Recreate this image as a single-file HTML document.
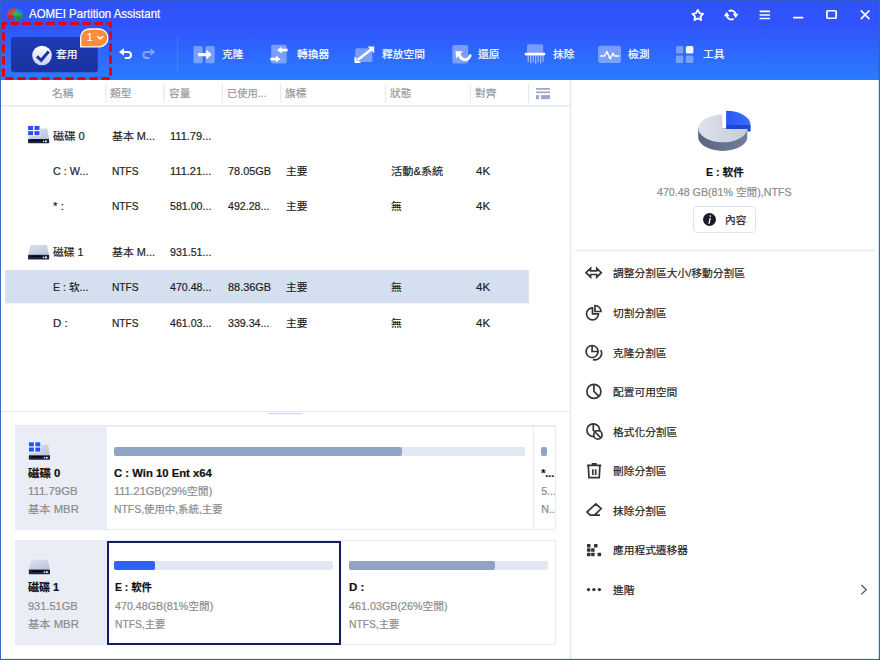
<!DOCTYPE html>
<html><head><meta charset="utf-8"><title>AOMEI Partition Assistant</title>
<style>
html,body{margin:0;padding:0;}
body{width:880px;height:660px;overflow:hidden;background:#fff;position:relative;
 font-family:"Liberation Sans","Noto Sans CJK TC",sans-serif;font-size:10.67px;color:#1f1f1f;}
.abs{position:absolute;}
.t{position:absolute;white-space:nowrap;line-height:16px;height:16px;transform-origin:0 50%;-webkit-text-stroke:0.2px;}
.big{font-size:12px;}
#hdr{left:0;top:0;width:880px;height:80px;background:linear-gradient(180deg,#3052fb 0%,#3054fb 32%,#2b7cff 100%);}
.w{color:#fff;}
.g{color:#8c8c8c;}
.h{color:#999;}
.b{font-weight:bold;color:#111;}
svg{position:absolute;overflow:visible;}
</style></head><body>
<div id="hdr" class="abs"></div>
<!-- selected row -->
<svg style="left:0;top:260px" width="540" height="50"><rect x="5.2" y="10" width="523.7" height="33.4" fill="#d4dff0"/></svg>
<!-- table header lines -->
<svg style="left:0;top:80px" width="570" height="30"><rect x="105.35" y="3.8" width="1.1" height="18.7" fill="#e3e7f1"/><rect x="163.55" y="3.8" width="1.1" height="18.7" fill="#e3e7f1"/><rect x="221.75" y="3.8" width="1.1" height="18.7" fill="#e3e7f1"/><rect x="279.85" y="3.8" width="1.1" height="18.7" fill="#e3e7f1"/><rect x="385.05" y="3.8" width="1.1" height="18.7" fill="#e3e7f1"/><rect x="469.85" y="3.8" width="1.1" height="18.7" fill="#e3e7f1"/><rect x="527.95" y="3.8" width="1.1" height="18.7" fill="#e3e7f1"/></svg>
<div class="abs" style="left:1px;top:105px;width:569px;height:2px;background:#eaeef6;"></div>
<!-- splitters -->
<div class="abs" style="left:1px;top:411px;width:569px;height:1px;background:#e4e9f4;"></div>
<svg style="left:260px;top:410px" width="50" height="8"><rect x="7.5" y="2.9" width="35.5" height="1.3" fill="#cdd6eb"/></svg>
<svg style="left:565px;top:80px" width="10" height="579"><rect x="5" y="0" width="1.35" height="579" fill="#e2e8f4"/></svg>
<!-- disk maps -->
<div class="abs" style="left:15px;top:425px;width:541px;height:105px;background:#e7ebf3;"></div>
<div class="abs" style="left:107px;top:427px;width:426px;height:102px;background:#fff;"></div>
<div class="abs" style="left:534px;top:427px;width:21px;height:102px;background:#fff;"></div>
<div class="abs" style="left:15px;top:540px;width:541px;height:105px;background:#e7ebf3;"></div>
<div class="abs" style="left:107px;top:541px;width:448px;height:103px;background:#fff;"></div>
<div class="abs" style="left:15px;top:426px;width:92px;height:103px;background:#eaedf5;"></div>
<div class="abs" style="left:15px;top:541px;width:92px;height:103px;background:#eaedf5;"></div>
<div class="abs" style="left:114px;top:447px;width:411px;height:9px;border-radius:2px;background:#e1e7f3;"></div>
<div class="abs" style="left:114px;top:447px;width:288px;height:9px;border-radius:2px;background:#8fa4c5;"></div>
<div class="abs" style="left:541px;top:447px;width:6px;height:9px;border-radius:2px;background:#8fa4c5;"></div>
<div class="abs" style="left:107px;top:541px;width:234px;height:104px;border:2px solid #141d5e;box-sizing:border-box;background:#fff;"></div>
<div class="abs" style="left:114px;top:561px;width:219px;height:9px;border-radius:2px;background:#e1e7f3;"></div>
<div class="abs" style="left:114px;top:561px;width:41px;height:9px;border-radius:2px;background:#2f63f8;"></div>
<div class="abs" style="left:349px;top:561px;width:199px;height:9px;border-radius:2px;background:#e1e7f3;"></div>
<div class="abs" style="left:349px;top:561px;width:146px;height:9px;border-radius:2px;background:#8fa4c5;"></div>
<!-- right panel -->
<div class="abs" style="left:693px;top:206px;width:63px;height:27px;border:1px solid #dde3f1;border-radius:4px;box-sizing:border-box;"></div>
<svg style="left:570px;top:245px" width="310" height="10"><rect x="4.8" y="4.6" width="300" height="1.5" fill="#e5eaf6"/></svg>
<!-- apply button -->
<div class="abs" style="left:536px;top:460px;width:18.6px;height:60px;overflow:hidden;">
<div class="t b" style="left:5.2px;top:4.5px;">*...</div>
<div class="t g" style="left:5.2px;top:23px;">5...</div>
<div class="t g" style="left:5.2px;top:41.2px;">N...</div>
</div>
<svg style="left:0;top:0" width="880" height="660" viewBox="0 0 880 660">
<defs>
<linearGradient id="gbt" x1="0" y1="0" x2="0" y2="1"><stop offset="0" stop-color="#1d3bb6"/><stop offset="1" stop-color="#1b329f"/></linearGradient>
<linearGradient id="gck" x1="0" y1="0" x2="0" y2="1"><stop offset="0" stop-color="#ffffff"/><stop offset="1" stop-color="#c9d2f5"/></linearGradient>
<linearGradient id="gdk" x1="0" y1="0" x2="1" y2="1"><stop offset="0" stop-color="#dde2ee"/><stop offset="1" stop-color="#b9c2d6"/></linearGradient>
<linearGradient id="gpt" x1="0" y1="0" x2="1" y2="0"><stop offset="0" stop-color="#dde1eb"/><stop offset="1" stop-color="#c6ccdb"/></linearGradient>
<linearGradient id="gps" x1="0" y1="0" x2="1" y2="0"><stop offset="0" stop-color="#59647f"/><stop offset="1" stop-color="#737e98"/></linearGradient>
<linearGradient id="gpb" x1="0" y1="0" x2="1" y2="0"><stop offset="0" stop-color="#2a55fb"/><stop offset="1" stop-color="#3b70ff"/></linearGradient>
</defs>
<rect x="11" y="37" width="86.8" height="35.3" rx="3" fill="url(#gbt)"/>
<!-- red dashed -->
<rect x="3.5" y="23.5" width="107" height="55" fill="none" stroke="#e6000b" stroke-width="3" stroke-dasharray="6 6" stroke-dashoffset="3.9" stroke-linecap="round"/>
<!-- app icon -->
<g>
<path d="M7 15.5 C7 10.5 11 8.2 15.5 8.2 L15.5 14 L12 17 L9 19.5 L7.2 18.5 Z" fill="#e23a3a"/>
<path d="M7.2 15.5 L12 15 L14.5 17 L9.5 20.3 L7.2 19 Z" fill="#bf2c2c"/>
<path d="M15.5 8.2 C19.5 8.2 22.8 10.5 22.8 13.5 L19 14 L15 11.5 Z" fill="#2a78e4"/>
<path d="M12.5 11.5 L17 10.8 L20 13.2 L22.6 13.8 L22.6 17.5 L17 20.8 L14.8 20 L14.8 16.5 L12.2 14.2 Z" fill="#2fae62"/>
<path d="M14.8 16.8 L22.6 14.5 L22.6 17.8 L17 20.9 L14.8 20.2 Z" fill="#1f8b4b"/>
</g>
<!-- apply check -->
<circle cx="42" cy="55.5" r="9.8" fill="url(#gck)"/>
<path d="M36.9 56.3 L41.2 60.3 L48.7 51.6" fill="none" stroke="#1c36a8" stroke-width="3" stroke-linejoin="miter"/>
<!-- badge -->
<path d="M80.7 46.8 V37.5 A8.5 8.5 0 0 1 89.2 29 H99 A8.9 8.9 0 0 1 99 46.8 Z" fill="#ff8b3d" stroke="#fff" stroke-width="1.3"/>
<path d="M97.9 36.6 L100.3 38.9 L102.7 36.6" fill="none" stroke="#fff" stroke-width="1.5" stroke-linecap="round" stroke-linejoin="round"/>
<!-- undo / redo -->
<g fill="none" stroke="#fff" stroke-width="2">
<path d="M123.5 52 H128 a3 3 0 0 1 0 6 H124.8"/>
</g>
<path d="M119 52 L123.9 48.2 V55.8 Z" fill="#fff"/>
<g opacity="0.4">
<path d="M150.9 52 H146.4 a3 3 0 0 0 0 6 H149.4" fill="none" stroke="#fff" stroke-width="2"/>
<path d="M155.3 52 L150.5 48.2 V55.8 Z" fill="#fff"/>
</g>
<rect x="177.1" y="37" width="1" height="35" fill="#fff" opacity="0.13"/>
<!-- clone -->
<g fill="#fff">
<rect x="193.5" y="46" width="9.2" height="17.2" rx="1.5" opacity="0.36"/>
<rect x="205.5" y="46" width="9.2" height="17.2" rx="1.5" opacity="0.36"/>
<path d="M198 52.9 H206.2 V49.6 L211.7 54.6 L206.2 59.6 V56.3 H198 Z"/>
</g>
<!-- converter -->
<g fill="#fff">
<rect x="271.2" y="44.8" width="15.4" height="18.8" rx="1.5" opacity="0.36"/>
<path d="M277 50.1 L281.6 46.7 V48.7 H287.6 V51.5 H281.6 V53.5 Z"/>
<path d="M280.6 59.1 L276 55.7 V57.7 H270.3 V60.5 H276 V62.5 Z"/>
</g>
<!-- free space -->
<g fill="#fff">
<rect x="355.3" y="48.3" width="17.1" height="13.6" rx="1.5" opacity="0.36"/>
<path d="M367.6 46.6 H374.2 V53.2 Z M354.5 56.4 V63 H361.1 Z M372.3 50.3 L358 61.3 L356.4 59.3 L370.7 48.3 Z"/>
</g>
<!-- restore -->
<g fill="#fff">
<rect x="452.3" y="45" width="15.8" height="18.6" rx="2" opacity="0.36"/>
<path d="M455.5 51 L462.9 51.6 L456.1 58.4 Z"/><path d="M459.4 55 C461 60 467.3 62.3 470.2 55.6" fill="none" stroke="#fff" stroke-width="2.8" stroke-linecap="round"/>
</g>
<!-- wipe -->
<g fill="#fff">
<rect x="527" y="44.3" width="16.2" height="9" rx="1.5" opacity="0.36"/>
<rect x="524.6" y="52.8" width="20.8" height="2.6" rx="1.3"/>
<g opacity="0.55">
<rect x="527.6" y="55.4" width="1.2" height="6.4"/><rect x="530.1" y="55.4" width="1.2" height="8"/><rect x="532.6" y="55.4" width="1.2" height="7"/><rect x="535.1" y="55.4" width="1.2" height="8.4"/><rect x="537.6" y="55.4" width="1.2" height="7"/><rect x="540.1" y="55.4" width="1.2" height="8"/><rect x="542.4" y="55.4" width="1.2" height="6.4"/>
</g>
</g>
<!-- check -->
<rect x="598.1" y="45.8" width="22.9" height="17.2" rx="2" fill="#fff" opacity="0.36"/>
<path d="M600.3 56.1 H604.3 L606.9 51.5 L610 58.8 L613 53.4 L614.6 56.1 H619.4" fill="none" stroke="#fff" stroke-width="1.5" stroke-linejoin="round"/>
<!-- tools -->
<g fill="#fff">
<rect x="676" y="46.1" width="7.3" height="7.3" rx="1.5" opacity="0.36"/>
<rect x="685.8" y="46.1" width="7.6" height="7.3" rx="1.5" opacity="0.95"/>
<rect x="676" y="55.6" width="7.3" height="7.4" rx="1.5" opacity="0.36"/>
<rect x="685.8" y="55.6" width="7.6" height="7.4" rx="1.5" opacity="0.36"/>
</g>
<!-- window controls -->
<g fill="none" stroke="#fff" stroke-width="1.8" stroke-linejoin="round">
<path d="M697.8 9.9 L699.5 13.2 L703.1 13.8 L700.6 16.4 L701.1 20.0 L697.8 18.4 L694.5 20.0 L695.0 16.4 L692.5 13.8 L696.1 13.2 Z"/>
<path d="M728.7 11.3 A4.6 4.6 0 0 1 735.8 14.6"/>
<path d="M733.7 18.7 A4.6 4.6 0 0 1 726.6 15.4"/>
</g>
<path d="M732.8 13.8 H738.6 L735.7 18 Z" fill="#fff"/>
<path d="M723.8 16.2 H729.6 L726.7 12 Z" fill="#fff"/>
<g fill="#fff">
<rect x="759.5" y="10.55" width="10.6" height="1.6" rx="0.4"/><rect x="759.5" y="14.15" width="10.6" height="1.6" rx="0.4"/><rect x="759.5" y="17.7" width="10.6" height="1.6" rx="0.4"/>
<rect x="793" y="16.7" width="10.4" height="1.7" rx="0.4"/>
</g>
<rect x="826.95" y="10.75" width="9.2" height="7.5" rx="0.8" fill="none" stroke="#fff" stroke-width="1.7"/>
<path d="M861.3 10.9 L869 18.6 M869 10.9 L861.3 18.6" stroke="#fff" stroke-width="1.6" fill="none" stroke-linecap="round"/>
<!-- list icon -->
<g fill="#9ba5c6">
<rect x="536" y="88" width="14" height="1.7"/><rect x="536" y="91.5" width="14" height="1.6"/><rect x="536" y="95.1" width="3.1" height="4"/><rect x="541.1" y="95.1" width="8.9" height="4"/>
</g>
<!-- disk icons -->
<g>
<path d="M31 128.4 H47.3 L49.2 139 H28 Z" fill="url(#gdk)"/>
<rect x="28" y="138.9" width="21.2" height="4.4" rx="0.8" fill="#1b2646"/>
<rect x="30.6" y="139.7" width="12" height="1.5" fill="#05070f"/>
<rect x="43.1" y="140.8" width="1.1" height="1.2" fill="#fff"/><rect x="45" y="140.6" width="1.8" height="1.5" fill="#fff"/>
<rect x="27.4" y="125.2" width="12.9" height="10.8" fill="#fff" opacity="0.9"/>
<g fill="#2450ff"><rect x="28.1" y="125.9" width="5" height="4.1"/><rect x="34.5" y="125.9" width="5" height="4.1"/><rect x="28.1" y="131.1" width="5" height="4.1"/><rect x="34.5" y="131.1" width="5" height="4.1"/></g>
</g>
<g>
<path d="M30.5 245 H46.8 L49.2 254.8 H28 Z" fill="url(#gdk)"/>
<rect x="28" y="254.7" width="21.2" height="4.8" rx="0.8" fill="#1b2646"/>
<rect x="30.9" y="255.5" width="11" height="1.6" fill="#05070f"/>
<rect x="43" y="256.8" width="1.1" height="1.3" fill="#fff"/><rect x="44.9" y="256.6" width="2.1" height="1.6" fill="#fff"/>
</g>
<g transform="translate(0.8 316.4)">
<path d="M31 128.4 H47.3 L49.2 139 H28 Z" fill="url(#gdk)"/>
<rect x="28" y="138.9" width="21.2" height="4.4" rx="0.8" fill="#1b2646"/>
<rect x="30.6" y="139.7" width="12" height="1.5" fill="#05070f"/>
<rect x="43.1" y="140.8" width="1.1" height="1.2" fill="#fff"/><rect x="45" y="140.6" width="1.8" height="1.5" fill="#fff"/>
<rect x="27.4" y="125.2" width="12.9" height="10.8" fill="#fff" opacity="0.9"/>
<g fill="#2450ff"><rect x="28.1" y="125.9" width="5" height="4.1"/><rect x="34.5" y="125.9" width="5" height="4.1"/><rect x="28.1" y="131.1" width="5" height="4.1"/><rect x="34.5" y="131.1" width="5" height="4.1"/></g>
</g>
<g transform="translate(0.8 314.8)">
<path d="M30.5 245 H46.8 L49.2 254.8 H28 Z" fill="url(#gdk)"/>
<rect x="28" y="254.7" width="21.2" height="4.8" rx="0.8" fill="#1b2646"/>
<rect x="30.9" y="255.5" width="11" height="1.6" fill="#05070f"/>
<rect x="43" y="256.8" width="1.1" height="1.3" fill="#fff"/><rect x="44.9" y="256.6" width="2.1" height="1.6" fill="#fff"/>
</g>
<!-- pie -->
<path d="M698.2 128.4 V137 A24.55 13.9 0 0 0 747.3 137 V128.4 Z" fill="url(#gps)"/>
<path d="M722.3 114.5 A24.5 13.9 0 1 0 747.3 129.1 H722.3 Z" fill="url(#gpt)"/>
<path d="M726.1 125 H750.6 V131.5 H747.5 V129 H726.1 Z" fill="#1f46d2"/>
<path d="M726.1 110.7 A24.5 14.3 0 0 1 750.6 125 H726.1 Z" fill="url(#gpb)"/>
<!-- info -->
<circle cx="709.5" cy="219.5" r="6.5" fill="#1b1b2a"/>
<path d="M710.6 215.3 L711.2 216.6 L709.9 216.9 L709.4 215.6 Z M709.6 218 L710.9 218 L709.6 223.8 L708.3 223.8 Z" fill="#fff"/>
<!-- right menu icons -->
<g fill="none" stroke="#363636" stroke-width="1.7" stroke-linejoin="miter">
<path d="M586 272.7 L590.6 268.2 V270.9 H596.7 V268.2 L601.3 272.7 L596.7 277.2 V274.5 H590.6 V277.2 Z"/>
<path d="M592.5 307.8 A6 6 0 1 0 598.5 313.8 H592.5 Z"/>
<path d="M595 305.5 A6 6 0 0 1 601 311.5 H595 Z"/>
<circle cx="592.1" cy="351.5" r="6"/>
<path d="M592.1 345.5 V351.5 H598.1"/>
<path d="M600.8 350.2 A6.5 6.5 0 0 1 592.9 359.4"/>
<circle cx="593.9" cy="391.4" r="7"/>
<path d="M593.9 384.4 V391.4 L599 396.3"/>
<circle cx="593.3" cy="430.2" r="6.4"/>
<path d="M593.3 423.8 V430.2 L596 433"/>
<circle cx="597.9" cy="434.9" r="4.2" fill="#fff"/>
<path d="M594.9 432 L600.9 437.8"/>
<path d="M587 465.4 H601.2 M591.7 463.8 H596.7"/>
<path d="M588.3 465.6 L589 477.7 H599.2 L599.9 465.6"/>
<path d="M592.8 469.3 V475 M595.7 469.3 V475"/>
<path d="M595.8 503.9 L601.2 508.6 L594.6 515.2 H590.2 L587 512 Z M594.6 515.2 H600"/>
</g>
<g fill="#333">
<rect x="587" y="544" width="3.5" height="3.5" rx="0.6"/><rect x="594" y="544" width="3.5" height="3.5" rx="0.6"/>
<rect x="587" y="548.3" width="3.5" height="3.5" rx="0.6"/><rect x="591.1" y="548.3" width="3.5" height="3.5" rx="0.6"/>
<rect x="587" y="552.7" width="3.5" height="3.5" rx="0.6"/><rect x="591.1" y="552.7" width="3.5" height="3.5" rx="0.6"/><rect x="597.6" y="552.7" width="3.5" height="3.5" rx="0.6"/>
<circle cx="588.5" cy="589.6" r="1.7"/><circle cx="593.9" cy="589.6" r="1.7"/><circle cx="599.4" cy="589.6" r="1.7"/>
</g>
<path d="M861.3 585 L866.3 589.7 L861.3 594.4" fill="none" stroke="#555" stroke-width="1.3"/>
</svg>

<!-- texts -->
<div class="t w big" style="left:28.9px;top:5.7px;transform:scaleX(0.9549);">AOMEI Partition Assistant</div>
<div class="t w" style="left:56.0px;top:46.2px;transform:scaleX(1.0050);">套用</div>
<div class="t w" style="left:221.8px;top:46.2px;transform:scaleX(1.0050);">克隆</div>
<div class="t w" style="left:296.9px;top:46.2px;transform:scaleX(1.0050);">轉換器</div>
<div class="t w" style="left:382.0px;top:46.2px;transform:scaleX(1.0050);">釋放空間</div>
<div class="t w" style="left:478.1px;top:46.2px;transform:scaleX(1.0050);">還原</div>
<div class="t w" style="left:553.1px;top:46.2px;transform:scaleX(1.0050);">抹除</div>
<div class="t w" style="left:628.1px;top:46.2px;transform:scaleX(1.0050);">檢測</div>
<div class="t w" style="left:702.8px;top:46.2px;transform:scaleX(1.0050);">工具</div>
<div class="t h" style="left:52.3px;top:84.8px;transform:scaleX(1.0050);">名稱</div>
<div class="t h" style="left:110.2px;top:84.8px;transform:scaleX(1.0050);">類型</div>
<div class="t h" style="left:168.6px;top:84.8px;transform:scaleX(1.0050);">容量</div>
<div class="t h" style="left:227.4px;top:84.8px;transform:scaleX(0.9618);">已使用...</div>
<div class="t h" style="left:284.7px;top:84.8px;transform:scaleX(1.0050);">旗標</div>
<div class="t h" style="left:390.2px;top:84.8px;transform:scaleX(1.0050);">狀態</div>
<div class="t h" style="left:475.0px;top:84.8px;transform:scaleX(1.0050);">對齊</div>
<div class="t " style="left:53.3px;top:127.9px;transform:scaleX(1.0529);">磁碟 0</div>
<div class="t " style="left:111.6px;top:127.9px;transform:scaleX(1.0227);">基本 M...</div>
<div class="t " style="left:170.0px;top:127.9px;transform:scaleX(1.0374);">111.79...</div>
<div class="t " style="left:53.3px;top:163.1px;transform:scaleX(1.0132);">C : W...</div>
<div class="t " style="left:111.6px;top:163.1px;transform:scaleX(0.9559);">NTFS</div>
<div class="t " style="left:170.0px;top:163.1px;transform:scaleX(1.0374);">111.21...</div>
<div class="t " style="left:227.6px;top:163.1px;transform:scaleX(1.0243);">78.05GB</div>
<div class="t " style="left:285.7px;top:163.1px;transform:scaleX(1.0050);">主要</div>
<div class="t " style="left:391.1px;top:163.1px;transform:scaleX(1.0516);">活動&amp;系統</div>
<div class="t " style="left:475.6px;top:163.1px;transform:scaleX(1.0800);">4K</div>
<div class="t " style="left:53.3px;top:198.0px;transform:scaleX(1.0800);">* :</div>
<div class="t " style="left:111.6px;top:198.0px;transform:scaleX(0.9559);">NTFS</div>
<div class="t " style="left:170.0px;top:198.0px;transform:scaleX(0.9980);">581.00...</div>
<div class="t " style="left:227.6px;top:198.0px;transform:scaleX(0.9980);">492.28...</div>
<div class="t " style="left:285.7px;top:198.0px;transform:scaleX(1.0050);">主要</div>
<div class="t " style="left:391.1px;top:198.0px;transform:scaleX(1.0050);">無</div>
<div class="t " style="left:475.6px;top:198.0px;transform:scaleX(1.0800);">4K</div>
<div class="t " style="left:53.3px;top:244.3px;transform:scaleX(1.0098);">磁碟 1</div>
<div class="t " style="left:111.6px;top:244.3px;transform:scaleX(1.0227);">基本 M...</div>
<div class="t " style="left:170.0px;top:244.3px;transform:scaleX(0.9980);">931.51...</div>
<div class="t " style="left:53.3px;top:279.4px;transform:scaleX(0.9963);">E : 软...</div>
<div class="t " style="left:111.6px;top:279.4px;transform:scaleX(0.9559);">NTFS</div>
<div class="t " style="left:170.0px;top:279.4px;transform:scaleX(0.9980);">470.48...</div>
<div class="t " style="left:227.6px;top:279.4px;transform:scaleX(1.0243);">88.36GB</div>
<div class="t " style="left:285.7px;top:279.4px;transform:scaleX(1.0050);">主要</div>
<div class="t " style="left:391.1px;top:279.4px;transform:scaleX(1.0050);">無</div>
<div class="t " style="left:475.6px;top:279.4px;transform:scaleX(1.0800);">4K</div>
<div class="t " style="left:53.3px;top:314.5px;transform:scaleX(1.0800);">D :</div>
<div class="t " style="left:111.6px;top:314.5px;transform:scaleX(0.9559);">NTFS</div>
<div class="t " style="left:170.0px;top:314.5px;transform:scaleX(0.9980);">461.03...</div>
<div class="t " style="left:227.6px;top:314.5px;transform:scaleX(0.9980);">339.34...</div>
<div class="t " style="left:285.7px;top:314.5px;transform:scaleX(1.0050);">主要</div>
<div class="t " style="left:391.1px;top:314.5px;transform:scaleX(1.0050);">無</div>
<div class="t " style="left:475.6px;top:314.5px;transform:scaleX(1.0800);">4K</div>
<div class="t b" style="left:28.4px;top:464.5px;transform:scaleX(1.0694);">磁碟 0</div>
<div class="t g" style="left:28.4px;top:483.0px;transform:scaleX(1.0688);">111.79GB</div>
<div class="t g" style="left:28.4px;top:501.2px;transform:scaleX(1.0590);">基本 MBR</div>
<div class="t b" style="left:28.4px;top:579.0px;transform:scaleX(1.0297);">磁碟 1</div>
<div class="t g" style="left:28.4px;top:597.5px;transform:scaleX(1.0333);">931.51GB</div>
<div class="t g" style="left:28.4px;top:615.7px;transform:scaleX(1.0590);">基本 MBR</div>
<div class="t b" style="left:114.2px;top:464.5px;transform:scaleX(1.0598);">C : Win 10 Ent x64</div>
<div class="t g" style="left:114.2px;top:483.0px;transform:scaleX(1.0223);">111.21GB(29%空閒)</div>
<div class="t g" style="left:114.2px;top:501.2px;transform:scaleX(0.9756);">NTFS,使用中,系統,主要</div>
<div class="t b" style="left:114.6px;top:579.0px;transform:scaleX(0.9739);">E : 软件</div>
<div class="t g" style="left:114.6px;top:597.5px;transform:scaleX(1.0048);">470.48GB(81%空閒)</div>
<div class="t g" style="left:114.6px;top:615.7px;transform:scaleX(0.9634);">NTFS,主要</div>
<div class="t b" style="left:349.3px;top:579.0px;transform:scaleX(1.0800);">D :</div>
<div class="t g" style="left:349.3px;top:597.5px;transform:scaleX(1.0089);">461.03GB(26%空閒)</div>
<div class="t g" style="left:349.3px;top:615.7px;transform:scaleX(0.9653);">NTFS,主要</div>
<div class="t w" style="left:87.2px;top:29.3px;transform:scaleX(0.9500);">1</div>
<div class="t b" style="left:705.5px;top:163.5px;transform:scaleX(0.9976);">E : 软件</div>
<div class="t g" style="left:657.3px;top:183.5px;transform:scaleX(1.0012);">470.48 GB(81% 空閒),NTFS</div>
<div class="t " style="left:725.1px;top:212.1px;transform:scaleX(1.0050);">內容</div>
<div class="t " style="left:612.9px;top:265.3px;transform:scaleX(1.0081);">調整分割區大小/移動分割區</div>
<div class="t " style="left:612.9px;top:304.9px;transform:scaleX(1.0050);">切割分割區</div>
<div class="t " style="left:612.9px;top:344.5px;transform:scaleX(1.0050);">克隆分割區</div>
<div class="t " style="left:612.9px;top:384.1px;transform:scaleX(1.0050);">配置可用空間</div>
<div class="t " style="left:612.9px;top:423.7px;transform:scaleX(1.0050);">格式化分割區</div>
<div class="t " style="left:612.9px;top:463.2px;transform:scaleX(1.0050);">刪除分割區</div>
<div class="t " style="left:612.9px;top:502.8px;transform:scaleX(1.0050);">抹除分割區</div>
<div class="t " style="left:612.9px;top:542.4px;transform:scaleX(1.0050);">應用程式遷移器</div>
<div class="t " style="left:612.9px;top:582.0px;transform:scaleX(1.0050);">進階</div>
<svg style="left:0;top:0" width="880" height="660"><g fill="#2f62c1"><rect x="0" y="0" width="880" height="0.8"/><rect x="0" y="0" width="0.95" height="660"/><rect x="878.8" y="0" width="1.2" height="660"/><rect x="0" y="658.9" width="880" height="1.1"/></g></svg>
</body></html>
